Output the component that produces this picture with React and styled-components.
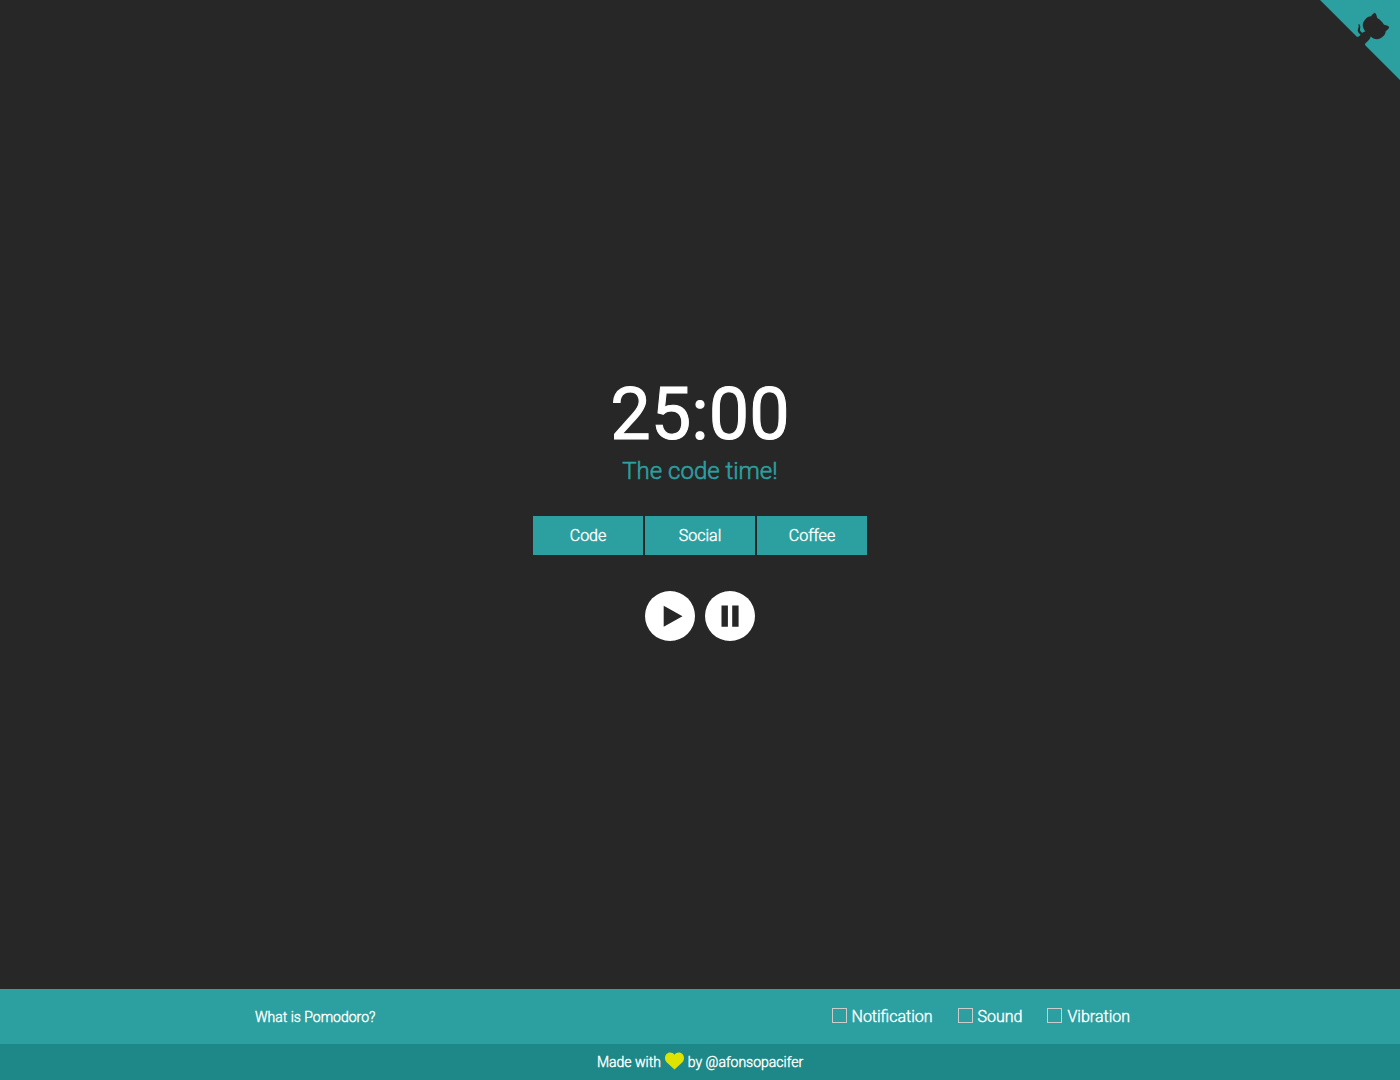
import React, { useEffect, useState } from "react";
import styled, { createGlobalStyle } from "styled-components";

const GlobalStyle = createGlobalStyle`
  *, *::before, *::after { box-sizing: border-box; }
  body {
    margin: 0;
    background: #272727;
    color: #fff;
    font-family: Roboto, "Liberation Sans", sans-serif;
    font-weight: 300;
    -webkit-text-stroke: 0.025em currentColor;
  }
`;

const Page = styled.div`
  display: flex;
  flex-direction: column;
  min-height: 100vh;
`;

const Corner = styled.a`
  position: absolute;
  top: 0;
  right: 0;
  color: #272727;

  svg {
    display: block;
    width: 80px;
    height: 80px;
  }
`;

const Main = styled.main`
  flex: 1;
  display: flex;
  flex-direction: column;
  align-items: center;
  justify-content: center;
  padding: 24px 16px 0;
`;

const Clock = styled.h1`
  margin: 0;
  font-size: 72px;
  line-height: 86px;
  font-weight: 400;
  -webkit-text-stroke: 1px currentColor;
`;

const Message = styled.p`
  margin: 0 0 32px;
  color: #2ca0a0;
  font-size: 24px;
  line-height: 26px;
  -webkit-text-stroke: 0.025em currentColor;
`;

const Modes = styled.div`
  display: flex;
  gap: 2px;
`;

const ModeButton = styled.button`
  width: 110px;
  height: 39px;
  padding: 0;
  border: 0;
  background: #2ca0a0;
  color: #fff;
  font: inherit;
  font-size: 16px;
  -webkit-text-stroke: 0.025em currentColor;
  cursor: pointer;
`;

const Controls = styled.div`
  display: flex;
  gap: 10px;
  margin-top: 36px;
`;

const RoundButton = styled.button`
  width: 50px;
  height: 50px;
  padding: 0;
  border: 0;
  border-radius: 50%;
  background: #fff;
  color: #272727;
  cursor: pointer;

  svg {
    display: block;
    width: 50px;
    height: 50px;
  }
`;

const Options = styled.div`
  background: #2ca0a0;
`;

const OptionsInner = styled.div`
  display: flex;
  align-items: center;
  justify-content: space-between;
  width: 100%;
  max-width: 920px;
  min-height: 55px;
  margin: 0 auto;
  padding: 0 30px 0 15px;
`;

const TextLink = styled.a`
  color: #fff;
  font-size: ${({ $size }) => $size || "inherit"};
  text-decoration: none;
`;

const Settings = styled.div`
  display: flex;
  gap: 25px;
`;

const Setting = styled.label`
  display: flex;
  align-items: center;
  gap: 5px;
  font-size: 16px;
  line-height: 20px;
`;

const Tick = styled.input`
  appearance: none;
  width: 15px;
  height: 15px;
  margin: 0 0 2px;
  border: 1px solid #ccc;

  &:checked {
    background: #dfe300;
  }
`;

const Credit = styled.footer`
  display: flex;
  align-items: center;
  justify-content: center;
  gap: 4px;
  min-height: 36px;
  background: #1d8887;
  font-size: 14px;

  svg {
    width: 19px;
    height: 18px;
    margin-bottom: 2px;
    fill: #dfe300;
  }
`;

const MODES = [
  { name: "Code", seconds: 1500, message: "The code time!" },
  { name: "Social", seconds: 300, message: "The social time!" },
  { name: "Coffee", seconds: 900, message: "The coffee time!" },
];

const SETTINGS = ["Notification", "Sound", "Vibration"];

const pad = (n) => String(n).padStart(2, "0");

export default function App() {
  const [mode, setMode] = useState(MODES[0]);
  const [left, setLeft] = useState(MODES[0].seconds);
  const [running, setRunning] = useState(false);

  useEffect(() => {
    if (!running) return undefined;
    const timer = setInterval(() => setLeft((s) => Math.max(0, s - 1)), 1000);
    return () => clearInterval(timer);
  }, [running]);

  const choose = (next) => {
    setMode(next);
    setLeft(next.seconds);
    setRunning(true);
  };

  return (
    <Page>
      <GlobalStyle />
      <Corner href="#source" aria-label="View source on GitHub">
        <svg viewBox="0 0 250 250" aria-hidden="true">
          <path fill="#2ca0a0" d="M0,0 L115,115 L130,115 L142,142 L250,250 L250,0 Z" />
          <path
            fill="currentColor"
            d="M128.3,109.0 C113.8,99.7 119.0,89.6 119.0,89.6 C122.0,82.7 120.5,78.6 120.5,78.6 C119.2,72.0 123.4,76.3 123.4,76.3 C127.3,80.9 125.5,87.3 125.5,87.3 C122.9,97.6 130.6,101.9 134.4,103.2"
          />
          <path
            fill="currentColor"
            d="M115.0,115.0 C114.9,115.1 118.7,116.5 119.8,115.4 L133.7,101.6 C136.9,99.2 139.9,98.4 142.2,98.6 C133.8,88.0 127.5,74.4 143.8,58.0 C148.5,53.4 154.0,51.2 159.7,51.0 C160.3,49.4 163.2,43.6 171.4,40.1 C171.4,40.1 176.1,42.5 178.8,56.2 C183.1,58.6 187.2,61.8 190.9,65.4 C194.5,69.0 197.7,73.2 200.1,77.6 C213.8,80.2 216.3,84.9 216.3,84.9 C212.7,93.1 206.9,96.0 205.4,96.6 C205.1,102.4 203.0,107.8 198.3,112.5 C181.9,128.9 168.3,122.5 157.7,114.1 C157.9,116.9 156.7,120.9 152.7,124.9 L141.0,136.5 C139.8,137.7 141.6,141.9 141.8,141.8 Z"
          />
        </svg>
      </Corner>

      <Main>
        <Clock>{`${pad(Math.floor(left / 60))}:${pad(left % 60)}`}</Clock>
        <Message>{mode.message}</Message>
        <Modes>
          {MODES.map((item) => (
            <ModeButton key={item.name} type="button" onClick={() => choose(item)}>
              {item.name}
            </ModeButton>
          ))}
        </Modes>
        <Controls>
          <RoundButton type="button" aria-label="Play" onClick={() => setRunning(true)}>
            <svg viewBox="0 0 50 50" aria-hidden="true">
              <path fill="currentColor" d="M18.7 14.700v21L37.500 25.200z" />
            </svg>
          </RoundButton>
          <RoundButton type="button" aria-label="Pause" onClick={() => setRunning(false)}>
            <svg viewBox="0 0 50 50" aria-hidden="true">
              <path fill="currentColor" d="M16.500 14.400h6.400v21.300h-6.400zM27.200 14.400h6.400v21.300h-6.400z" />
            </svg>
          </RoundButton>
        </Controls>
      </Main>

      <Options>
        <OptionsInner>
          <TextLink href="#pomodoro" $size="14px">
            What is Pomodoro?
          </TextLink>
          <Settings>
            {SETTINGS.map((name) => (
              <Setting key={name}>
                <Tick type="checkbox" />
                {name}
              </Setting>
            ))}
          </Settings>
        </OptionsInner>
      </Options>

      <Credit>
        <span>Made with</span>
        <svg viewBox="0 0 19 18" role="img" aria-label="love">
          <path d="M9.5 17.6 1.6 10.2C.5 9.100 0 7.700 0 6.100 0 2.800 2.200.5 5.200.5c1.800 0 3.300.9 4.300 2.300C10.500 1.400 12 .5 13.800.5c3 0 5.200 2.300 5.200 5.600 0 1.600-.5 3-1.600 4.100z" />
        </svg>
        <span>
          by <TextLink href="#afonsopacifer">@afonsopacifer</TextLink>
        </span>
      </Credit>
    </Page>
  );
}
